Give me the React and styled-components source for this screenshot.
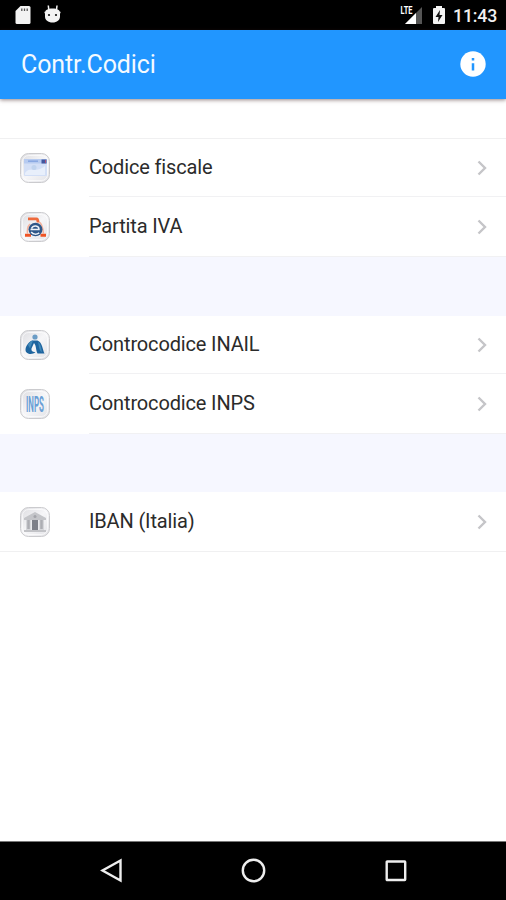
import styled, { createGlobalStyle } from "styled-components";

const GlobalStyle = createGlobalStyle`
  * {
    box-sizing: border-box;
  }

  body {
    margin: 0;
    background: #fff;
    font-family: Roboto, sans-serif;
  }
`;

const Screen = styled.div`
  display: flex;
  flex-direction: column;
  width: 506px;
  height: 900px;
  overflow: hidden;
  background: #fff;
`;

const StatusBar = styled.div`
  display: flex;
  flex: none;
  align-items: center;
  height: 30px;
  padding: 0 9px 0 14px;
  background: #000;

  svg {
    display: block;
  }
`;

const StatusGroup = styled.div`
  display: flex;
  align-items: center;
  gap: ${({ $gap }) => $gap}px;
  margin-left: ${({ $end }) => ($end ? "auto" : "0")};
`;

const Clock = styled.span`
  margin-left: -2px;
  padding-top: 2px;
  color: #f0f0f0;
  font-size: 17.7px;
  font-weight: 500;
  line-height: 28px;
  letter-spacing: -0.2px;
`;

const Header = styled.header`
  display: flex;
  flex: none;
  align-items: center;
  justify-content: space-between;
  height: 69px;
  padding: 0 20px 0 21px;
  background: #2196ff;
  box-shadow: 0 1px 4px rgba(60, 30, 30, 0.55);
`;

const Title = styled.h1`
  margin: 0;
  padding-top: 1px;
  color: #f4faff;
  font-size: 25px;
  font-weight: 400;
  line-height: 30px;
  letter-spacing: -0.1px;
`;

const InfoButton = styled.button`
  display: flex;
  padding: 0 0 1px;
  border: none;
  background: none;
`;

const List = styled.main`
  flex: 1;
  padding-top: 39px;
`;

const Section = styled.section`
  border-top: ${({ $line }) => ($line ? "1px solid #f0f0f1" : "none")};
  border-bottom: ${({ $last }) => ($last ? "1px solid #f0f0f1" : "none")};
`;

const Spacer = styled.div`
  height: ${({ $height }) => $height}px;
  background: #f6f7ff;
`;

const Row = styled.div`
  display: flex;
  align-items: center;
  height: ${({ $height }) => $height}px;
  padding-left: 19px;
`;

const RowBody = styled.div`
  display: flex;
  flex: 1;
  align-items: center;
  justify-content: space-between;
  height: 100%;
  margin-left: 38px;
  padding-top: 1px;
  padding-right: 17px;
  border-bottom: ${({ $line }) => ($line ? "1px solid #f1f1f3" : "none")};
`;

const Label = styled.span`
  padding-bottom: 2px;
  color: #2b2b2b;
  font-size: 20px;
  line-height: 24px;
  letter-spacing: -0.15px;
  font-variant-ligatures: none;
`;

const NavBar = styled.nav`
  display: flex;
  flex: none;
  justify-content: space-between;
  height: 59px;
  padding: 15px 96px 0 98px;
  border-top: 1px solid #777;
  background: #000;
`;

const TileSvg = styled.svg`
  display: block;
  overflow: visible;
`;

const Tile = ({ id, children }) => (
  <TileSvg width="32" height="32" viewBox="0 0 32 32">
    <defs>
      <linearGradient id={id} x1="0" y1="0" x2="1" y2="1">
        <stop offset="0" stopColor="#dcdce0" />
        <stop offset="0.5" stopColor="#f6f6f8" />
        <stop offset="1" stopColor="#e2e2e6" />
      </linearGradient>
    </defs>
    <rect x="1.5" y="1.5" width="29" height="29" rx="8" fill={`url(#${id})`} stroke="#cbcbce" />
    <rect x="3.5" y="3.5" width="25" height="25" rx="6" fill="none" stroke="#fff" strokeOpacity="0.65" />
    {children}
  </TileSvg>
);

const CardIcon = () => (
  <Tile id="card">
    <rect x="5" y="7" width="23" height="17" rx="1" fill="#d3dff6" />
    <rect x="5" y="7" width="23" height="4.5" fill="#b7cbf0" />
    <path d="M9 9.2h10" stroke="#8aa9e2" strokeWidth="1.6" />
    <rect x="22.5" y="7.5" width="5" height="4" fill="#41579f" />
    <path d="M26.5 8v3" stroke="#a8557e" />
    <path d="M6 21c5-7 10 1 20-7v9H6z" fill="#e8effb" />
    <circle cx="15" cy="15.5" r="2.5" fill="#c0d3ee" />
  </Tile>
);

const VatIcon = () => (
  <Tile id="vat">
    <path d="M9 7.8h8.5c1 0 1.500 2 1.500 3.800" fill="none" stroke="#ee6a3c" strokeWidth="2.8" />
    <path d="M6 24.300h6M21.500 24.300h5.500" stroke="#ef5425" strokeWidth="3" />
    <path d="M20 11c3 1.500 4 6 4.500 12M11 13c-2 2-3 6-2.500 10" fill="none" stroke="#f4b19b" strokeWidth="1.500" />
    <ellipse cx="16.500" cy="18.500" rx="7" ry="6.800" fill="#2f5788" />
    <path d="M11.500 18.500h8.500c0-4.500-6-4.600-7.500-1M12.200 21c2 2.800 5.500 2.600 8 .8" fill="none" stroke="#edf2f8" strokeWidth="1.500" />
  </Tile>
);

const InailIcon = () => (
  <Tile id="inail">
    <circle cx="16" cy="8" r="2.6" fill="#6b9cc5" />
    <path d="M13 11.500c-4 2-6.500 6-6.500 9.500 0 4 6.500 5.500 10 2-3 .3-4.500-1-4-3.500l2.500-5.500c2.500 3 1.500 6 3.500 10.500h7c-2-4-2-11-7-13z" fill="#1f659f" />
    <path d="M9 16c1-2.500 3-4 5-4.500l-3 8zM19 13c3 2 3 6 4 10-3-1-3-6-4-10" fill="#4289b9" />
  </Tile>
);

const InpsIcon = () => (
  <Tile id="inps">
    <g transform="translate(7 24) scale(0.36 1)">
      <text fill="#6a9fd6" fontFamily="Roboto, sans-serif" fontSize="22" fontWeight="700">
        INPS
      </text>
    </g>
  </Tile>
);

const BankIcon = () => (
  <Tile id="bank">
    <path d="M5 12L16 6l11 6v2H5z" fill="#c4c5c9" />
    <path d="M7 14h18v10H7z" fill="#d5d6da" />
    <path d="M9.5 14v9M22.5 14v9" stroke="#acadb3" strokeWidth="2.5" />
    <path d="M13 14h6v10h-6z" fill="#7d7f88" />
    <path d="M12.300 14v10M19.700 14v10" stroke="#eeeef0" />
    <path d="M5 25h22" stroke="#c2c3c7" strokeWidth="2" />
    <circle cx="16" cy="10.5" r="1.5" fill="#a3a4aa" />
  </Tile>
);

const Chevron = () => (
  <svg width="13" height="18" viewBox="0 0 13 18">
    <path d="M2.5 2.5L9 9l-6.500 6.500" fill="none" stroke="#c5c5c8" strokeWidth="2.4" />
  </svg>
);

const SdCardIcon = () => (
  <svg width="18" height="22" viewBox="0 0 18 22">
    <path d="M6.5 2H15a1.500 1.500 0 0 1 1.500 1.500v15A1.500 1.500 0 0 1 15 20H3a1.500 1.500 0 0 1-1.500-1.500V7z" fill="#f3f3f3" />
    <path d="M7.8 4.500v2.500M10.500 4.500v2.500M13.200 4.500v2.500" stroke="#555" strokeWidth="1.300" />
  </svg>
);

const DebugIcon = () => (
  <svg width="18" height="22" viewBox="0 0 18 22">
    <path d="M1 8h15v4.500c0 3.500-3 6-7.500 6S1 16 1 12.500z" fill="#f3f3f3" />
    <path d="M1 9c0-3 2.500-4.500 7.500-4.500S16 6 16 9z" fill="#f3f3f3" />
    <path d="M4.800 6L4.300 1.500M12.500 6l.5-4.500M.5 8.500h16" stroke="#f3f3f3" strokeWidth="1.500" />
    <circle cx="5" cy="11" r="1.100" fill="#111" />
    <circle cx="12" cy="11" r="1.100" fill="#111" />
  </svg>
);

const SignalIcon = () => (
  <svg width="23" height="22" viewBox="0 0 23 22">
    <path d="M22 3v17H5z" fill="#555" />
    <path d="M16 9v11H5z" fill="#fff" />
    <text
      x="0.5"
      y="9.5"
      fill="#fff"
      stroke="#000"
      strokeWidth="1"
      paintOrder="stroke"
      fontFamily="Roboto, sans-serif"
      fontSize="10.5"
      fontWeight="700"
      textLength="12"
      lengthAdjust="spacingAndGlyphs"
    >
      LTE
    </text>
  </svg>
);

const BatteryIcon = () => (
  <svg width="14" height="22" viewBox="0 0 14 22">
    <path d="M4 2h6v2h2a1 1 0 0 1 1 1v14a1 1 0 0 1-1 1H2a1 1 0 0 1-1-1V5a1 1 0 0 1 1-1h2z" fill="#f3f3f3" />
    <path d="M8 6l-4.500 7h3L6 18l4.500-7h-3z" fill="#111" />
  </svg>
);

const InfoIcon = () => (
  <svg width="26" height="26" viewBox="0 0 26 26">
    <circle cx="13" cy="13" r="12.7" fill="#fff" />
    <path d="M13 12.300v7.200M13 7v2.600" stroke="#2196ff" strokeWidth="2.5" />
  </svg>
);

const groups = [
  {
    gap: 59,
    rows: [
      { label: "Codice fiscale", icon: CardIcon, height: 58 },
      { label: "Partita IVA", icon: VatIcon, height: 60 },
    ],
  },
  {
    gap: 58,
    rows: [
      { label: "Controcodice INAIL", icon: InailIcon, height: 58 },
      { label: "Controcodice INPS", icon: InpsIcon, height: 60 },
    ],
  },
  {
    rows: [{ label: "IBAN (Italia)", icon: BankIcon, height: 59 }],
  },
];

const App = () => {
  return (
    <>
      <GlobalStyle />
      <Screen>
        <StatusBar>
          <StatusGroup $gap={12}>
            <SdCardIcon />
            <DebugIcon />
          </StatusGroup>
          <StatusGroup $gap={9} $end>
            <SignalIcon />
            <BatteryIcon />
            <Clock>11:43</Clock>
          </StatusGroup>
        </StatusBar>

        <Header>
          <Title>Contr.Codici</Title>
          <InfoButton type="button" aria-label="Info">
            <InfoIcon />
          </InfoButton>
        </Header>

        <List>
          {groups.map(({ rows, gap }, index) => (
            <div key={index}>
              <Section $line={index === 0} $last={!gap}>
                {rows.map(({ label, icon: Icon, height }) => (
                  <Row key={label} $height={height}>
                    <Icon />
                    <RowBody $line={Boolean(gap)}>
                      <Label>{label}</Label>
                      <Chevron />
                    </RowBody>
                  </Row>
                ))}
              </Section>
              {gap && <Spacer $height={gap} />}
            </div>
          ))}
        </List>

        <NavBar>
          <svg width="28" height="28" viewBox="0 0 28 28">
            <path d="M22.5 3.500v20L4.500 13.500z" fill="none" stroke="#eee" strokeWidth="2.4" />
          </svg>
          <svg width="28" height="28" viewBox="0 0 28 28">
            <circle cx="13.5" cy="13.5" r="10.7" fill="none" stroke="#eee" strokeWidth="2.4" />
          </svg>
          <svg width="28" height="28" viewBox="0 0 28 28">
            <rect x="4.7" y="4.5" width="18.5" height="18.5" rx="0.5" fill="none" stroke="#eee" strokeWidth="2.4" />
          </svg>
        </NavBar>
      </Screen>
    </>
  );
};

export default App;
